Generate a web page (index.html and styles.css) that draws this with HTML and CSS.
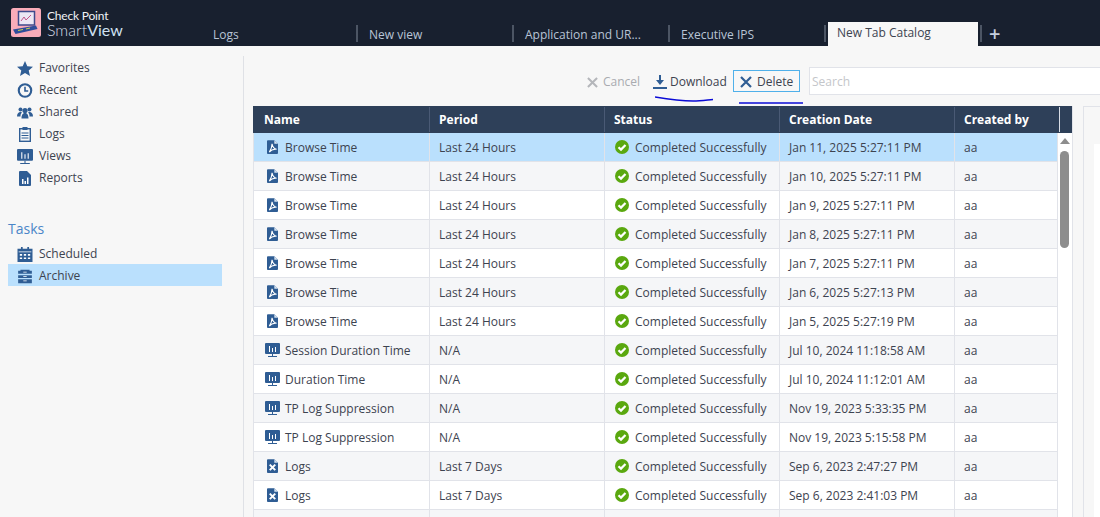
FILE: index.html
```html
<!DOCTYPE html>
<html lang="en">
<head>
<meta charset="utf-8">
<title>SmartView</title>
<link rel="stylesheet" href="styles.css">
</head>
<body>
<svg class="defs" width="0" height="0" aria-hidden="true">
  <symbol id="i-pdf" viewBox="0 0 12 15"><path fill="#2f5d94" d="M1 0h7l4 4v10a1 1 0 0 1-1 1H1a1 1 0 0 1-1-1V1a1 1 0 0 1 1-1z"/><path fill="#d5e2f0" d="M8 0l4 4H8z"/><path fill="none" stroke="#fff" stroke-width="1.200" d="M5.500 4c.6 3 2 5.500 5 6-3-.4-6 .5-8 3 1.500-2 3-5 3-9z"/></symbol>
  <symbol id="i-xls" viewBox="0 0 12 15"><path fill="#2f5d94" d="M1 0h7l4 4v10a1 1 0 0 1-1 1H1a1 1 0 0 1-1-1V1a1 1 0 0 1 1-1z"/><path fill="#d5e2f0" d="M8 0l4 4H8z"/><path stroke="#fff" stroke-width="2.200" d="M3 6l6 6M9 6l-6 6"/></symbol>
  <symbol id="i-view" viewBox="0 0 15 14"><path fill="#2f5d94" d="M1 0h13a1 1 0 0 1 1 1v9a1 1 0 0 1-1 1H1a1 1 0 0 1-1-1V1a1 1 0 0 1 1-1z"/><path fill="#fff" d="M4 3h1v6H4zM7 5h1v4H7zM10 4h1v5h-1z"/><path fill="#2f5d94" d="M7 11h1v2H7zM3 13h9v1H3z"/></symbol>
  <symbol id="i-report" viewBox="0 0 12 15"><path fill="#2f5d94" d="M1 0h7l4 4v10a1 1 0 0 1-1 1H1a1 1 0 0 1-1-1V1a1 1 0 0 1 1-1z"/><path fill="#fff" d="M3 8h1.500v5H3zM5.500 10H7v3H5.500zM8 6.500h1.500V13H8z"/></symbol>
  <symbol id="i-ok" viewBox="0 0 14 14"><circle cx="7" cy="7" r="7" fill="#5aa80f"/><path fill="none" stroke="#fff" stroke-width="2.200" d="M3.500 7.200l2.500 2.400 4.500-4.600"/></symbol>
  <symbol id="i-x" viewBox="0 0 12 12"><path fill="none" stroke="currentColor" stroke-width="2.200" d="M1 1l10 10M11 1L1 11"/></symbol>
</svg>

<header class="topbar">
  <div class="brand">
    <svg class="logo" viewBox="0 0 30 29" width="30" height="29">
      <rect width="30" height="29" rx="2.500" fill="#f9acba"/>
      <rect x="7.500" y="3.500" width="16" height="13.500" fill="#ece7f4" stroke="#3f4a8c" stroke-width="1.500"/>
      <path d="M10 13l3-4 2 3 5-5" fill="none" stroke="#c2558a" stroke-width="1"/>
      <path d="M2 21.500l23-4 1.500 3.500-22 5z" fill="#2f4d9a"/>
      <path d="M7 22.500l5-1M15 21l4-1" stroke="#c9d34c" stroke-width="1"/>
    </svg>
    <div class="brand-text">
      <span class="brand-top">Check Point</span>
      <span class="brand-name">Smart<b>View</b></span>
    </div>
  </div>
  <nav class="tabs">
    <span class="tab">Logs</span>
    <span class="tab tab-sep">New view</span>
    <span class="tab tab-sep">Application and UR...</span>
    <span class="tab tab-sep">Executive IPS</span>
    <span class="tab-active">New Tab Catalog</span>
    <span class="tab-plus">+</span>
  </nav>
</header>

<div class="page">
  <aside class="side">
    <ul class="nav">
      <li class="nav-item"><svg class="nav-ico" viewBox="0 0 16 15"><path fill="#2f5d94" d="M8 0l2.300 5.200 5.700.5-4.300 3.700 1.300 5.600L8 12l-5 3 1.300-5.600L0 5.700l5.700-.5z"/></svg>Favorites</li>
      <li class="nav-item"><svg class="nav-ico" viewBox="0 0 14 14"><circle cx="7" cy="7" r="5.800" fill="none" stroke="#2f5d94" stroke-width="2"/><path fill="none" stroke="#2f5d94" stroke-width="1.500" d="M7 3.500V7.500H10"/></svg>Recent</li>
      <li class="nav-item"><svg class="nav-ico" viewBox="0 0 16 12"><g fill="#2f5d94"><circle cx="3.500" cy="3" r="2"/><circle cx="12.500" cy="3" r="2"/><circle cx="8" cy="4" r="2.600"/><path d="M0 10c0-3 1.500-4.500 3.500-4.500 1 0 1.500.3 1.500.3C4 7 3.500 8 3.500 10zM16 10c0-3-1.500-4.500-3.500-4.500-1 0-1.500.3-1.500.3C12 7 12.500 8 12.500 10zM4.500 12c0-4 1.500-5.500 3.500-5.500s3.500 1.500 3.500 5.500z"/></g></svg>Shared</li>
      <li class="nav-item"><svg class="nav-ico" viewBox="0 0 12 15"><rect x=".7" y="1.700" width="10.600" height="12.600" fill="none" stroke="#2f5d94" stroke-width="1.400"/><rect x="3.500" y="0" width="5" height="3" fill="#2f5d94"/><path stroke="#2f5d94" d="M2.500 6h7M2.500 8.500h7M2.500 11h7"/></svg>Logs</li>
      <li class="nav-item"><svg class="nav-ico"><use href="#i-view"/></svg>Views</li>
      <li class="nav-item"><svg class="nav-ico"><use href="#i-report"/></svg>Reports</li>
    </ul>
    <h2 class="side-title">Tasks</h2>
    <ul class="nav nav-tasks">
      <li class="nav-item"><svg class="nav-ico" viewBox="0 0 13 13"><path fill="#2f5d94" d="M0 1.500h13V13H0z"/><path fill="#2f5d94" d="M3 0h1.500v2H3zM8.500 0H10v2H8.500z"/><path fill="#fff" d="M1 4h11v.6H1zM2 6h2v1.500H2zM5.500 6h2v1.500h-2zM9 6h2v1.500H9zM2 9h2v1.500H2zM5.500 9h2v1.500h-2zM9 9h2v1.500H9z"/></svg>Scheduled</li>
      <li class="nav-item nav-selected"><svg class="nav-ico" viewBox="0 0 14 12"><path fill="#2f5d94" d="M1 1h12v2.500H1zM1 4.800h12v2.500H1zM1 8.500h12V12H1zM3 0h8v1H3z"/><path fill="#fff" d="M5.500 1.800h3v.7h-3zM5.500 5.600h3v.7h-3zM5.500 9.500h3v.7h-3z"/></svg>Archive</li>
    </ul>
  </aside>

  <main class="main">
    <div class="toolbar">
      <span class="tool tool-off"><svg class="tool-x" viewBox="0 0 12 12"><use href="#i-x"/></svg>Cancel</span>
      <span class="tool tool-dl"><svg class="tool-dl-ico" viewBox="0 0 14 14"><path fill="#2f5d94" d="M6 0h2v5h3L7 10 3 5h3zM0 12h14v2H0z"/></svg>Download</span>
      <span class="tool tool-focus"><svg class="tool-x tool-x-on" viewBox="0 0 12 12"><use href="#i-x"/></svg>Delete</span>
      <div class="search">Search</div>
    </div>

    <div class="content">
      <section class="grid">
        <div class="row head">
          <div class="cell">Name</div><div class="cell">Period</div><div class="cell">Status</div><div class="cell">Creation Date</div><div class="cell">Created by</div><div class="cell cell-end"></div>
        </div>
        <div class="grid-body">
          <div class="rows">
            <div class="row selected"><div class="cell cell-name"><svg class="f-ico"><use href="#i-pdf"/></svg>Browse Time</div><div class="cell">Last 24 Hours</div><div class="cell cell-status"><svg class="ok"><use href="#i-ok"/></svg>Completed Successfully</div><div class="cell">Jan 11, 2025 5:27:11 PM</div><div class="cell">aa</div></div>
            <div class="row"><div class="cell cell-name"><svg class="f-ico"><use href="#i-pdf"/></svg>Browse Time</div><div class="cell">Last 24 Hours</div><div class="cell cell-status"><svg class="ok"><use href="#i-ok"/></svg>Completed Successfully</div><div class="cell">Jan 10, 2025 5:27:11 PM</div><div class="cell">aa</div></div>
            <div class="row"><div class="cell cell-name"><svg class="f-ico"><use href="#i-pdf"/></svg>Browse Time</div><div class="cell">Last 24 Hours</div><div class="cell cell-status"><svg class="ok"><use href="#i-ok"/></svg>Completed Successfully</div><div class="cell">Jan 9, 2025 5:27:11 PM</div><div class="cell">aa</div></div>
            <div class="row"><div class="cell cell-name"><svg class="f-ico"><use href="#i-pdf"/></svg>Browse Time</div><div class="cell">Last 24 Hours</div><div class="cell cell-status"><svg class="ok"><use href="#i-ok"/></svg>Completed Successfully</div><div class="cell">Jan 8, 2025 5:27:11 PM</div><div class="cell">aa</div></div>
            <div class="row"><div class="cell cell-name"><svg class="f-ico"><use href="#i-pdf"/></svg>Browse Time</div><div class="cell">Last 24 Hours</div><div class="cell cell-status"><svg class="ok"><use href="#i-ok"/></svg>Completed Successfully</div><div class="cell">Jan 7, 2025 5:27:11 PM</div><div class="cell">aa</div></div>
            <div class="row"><div class="cell cell-name"><svg class="f-ico"><use href="#i-pdf"/></svg>Browse Time</div><div class="cell">Last 24 Hours</div><div class="cell cell-status"><svg class="ok"><use href="#i-ok"/></svg>Completed Successfully</div><div class="cell">Jan 6, 2025 5:27:13 PM</div><div class="cell">aa</div></div>
            <div class="row"><div class="cell cell-name"><svg class="f-ico"><use href="#i-pdf"/></svg>Browse Time</div><div class="cell">Last 24 Hours</div><div class="cell cell-status"><svg class="ok"><use href="#i-ok"/></svg>Completed Successfully</div><div class="cell">Jan 5, 2025 5:27:19 PM</div><div class="cell">aa</div></div>
            <div class="row"><div class="cell cell-name"><svg class="f-ico f-wide"><use href="#i-view"/></svg>Session Duration Time</div><div class="cell">N/A</div><div class="cell cell-status"><svg class="ok"><use href="#i-ok"/></svg>Completed Successfully</div><div class="cell">Jul 10, 2024 11:18:58 AM</div><div class="cell">aa</div></div>
            <div class="row"><div class="cell cell-name"><svg class="f-ico f-wide"><use href="#i-view"/></svg>Duration Time</div><div class="cell">N/A</div><div class="cell cell-status"><svg class="ok"><use href="#i-ok"/></svg>Completed Successfully</div><div class="cell">Jul 10, 2024 11:12:01 AM</div><div class="cell">aa</div></div>
            <div class="row"><div class="cell cell-name"><svg class="f-ico f-wide"><use href="#i-view"/></svg>TP Log Suppression</div><div class="cell">N/A</div><div class="cell cell-status"><svg class="ok"><use href="#i-ok"/></svg>Completed Successfully</div><div class="cell">Nov 19, 2023 5:33:35 PM</div><div class="cell">aa</div></div>
            <div class="row"><div class="cell cell-name"><svg class="f-ico f-wide"><use href="#i-view"/></svg>TP Log Suppression</div><div class="cell">N/A</div><div class="cell cell-status"><svg class="ok"><use href="#i-ok"/></svg>Completed Successfully</div><div class="cell">Nov 19, 2023 5:15:58 PM</div><div class="cell">aa</div></div>
            <div class="row"><div class="cell cell-name"><svg class="f-ico"><use href="#i-xls"/></svg>Logs</div><div class="cell">Last 7 Days</div><div class="cell cell-status"><svg class="ok"><use href="#i-ok"/></svg>Completed Successfully</div><div class="cell">Sep 6, 2023 2:47:27 PM</div><div class="cell">aa</div></div>
            <div class="row"><div class="cell cell-name"><svg class="f-ico"><use href="#i-xls"/></svg>Logs</div><div class="cell">Last 7 Days</div><div class="cell cell-status"><svg class="ok"><use href="#i-ok"/></svg>Completed Successfully</div><div class="cell">Sep 6, 2023 2:41:03 PM</div><div class="cell">aa</div></div>
            <div class="row"><div class="cell"></div><div class="cell"></div><div class="cell"></div><div class="cell"></div><div class="cell"></div></div>
          </div>
          <div class="scrollbar"><span class="scroll-up"></span><span class="scroll-thumb"></span></div>
        </div>
      </section>
      <section class="panel"><div class="panel-inner"></div></section>
    </div>
  </main>
</div>

<svg class="ink ink-dl" viewBox="0 0 60 6" width="60" height="6"><path d="M0 1C12 3 24 5 38 5c8 0 14-1 20-1.500" fill="none" stroke="#0b0bd6" stroke-width="1.500"/></svg>
<svg class="ink ink-del" viewBox="0 0 64 2" width="64" height="2"><path d="M0 1h64" stroke="#0b0bd6" stroke-width="1.500"/></svg>
</body>
</html>
```

FILE: styles.css
```css
* { box-sizing: border-box; }
html, body { margin: 0; height: 517px; overflow: hidden; }
body { font: 12px/16px "Open Sans", sans-serif; color: #3d4350; background: #f7f7f7; position: relative; }
.defs { position: absolute; }
ul { list-style: none; margin: 0; padding: 0; }

.topbar { height: 46px; background: #18202f; display: flex; position: relative; }
.brand { width: 200px; padding: 8px 0 0 11px; display: flex; gap: 6px; flex: none; }
.logo { display: block; flex: none; }
.brand-text { display: flex; flex-direction: column; color: #fff; font-family: Lato, sans-serif; }
.brand-top { font-size: 12px; line-height: 13px; margin-top: 1px; white-space: nowrap; letter-spacing: -.2px; color: #f0f2f5; }
.brand-name { font-size: 16px; line-height: 15px; color: #d6dde8; font-weight: 300; white-space: nowrap; }
.brand-name b { font-weight: 400; color: #cfe0f2; }

.tabs { display: flex; align-items: flex-end; flex: 1; }
.tab { width: 156px; height: 20px; padding-left: 13px; color: #b9c4d6; white-space: nowrap; flex: none; line-height: 18px; }
.tab-sep { border-left: 2px solid #4c5564; padding-left: 11px; height: 17px; margin-bottom: 4px; line-height: 20px; }
.tab-active { width: 150px; height: 24px; margin-left: 4px; background: #f7f7f7; color: #3d4350; padding: 3px 0 0 9px; flex: none; position: relative; }
.tab-active::before { content: ""; position: absolute; left: -4px; top: 3px; height: 17px; width: 2px; background: #4c5564; }
.tab-active::after { content: ""; position: absolute; right: -4px; top: 3px; height: 17px; width: 2px; background: #4c5564; }
.tab-plus { margin-left: 11px; color: #c4cedd; font-size: 20px; font-weight: 600; line-height: 24px; height: 24px; }

.page { display: flex; height: 471px; }
.side { width: 244px; flex: none; padding: 11px 0 0 8px; position: relative; }
.side::after { content: ""; position: absolute; right: 0; top: 10px; bottom: 0; width: 1px; background: #dfe1e6; }
.nav-item { height: 22px; width: 214px; display: flex; align-items: center; padding-left: 9px; gap: 6px; line-height: 22px; }
.nav-tasks .nav-item { padding-top: 2px; }
.nav-selected { background: #bae0fd; }
.nav-ico { width: 16px; height: 15px; flex: none; }
.side-title { margin: 30px 0 3px; font-size: 14px; line-height: 20px; font-weight: 400; color: #4a86c8; }

.main { flex: 1; min-width: 0; display: flex; flex-direction: column; overflow: hidden; }
.toolbar { height: 60px; padding: 21px 0 0 343px; display: flex; align-items: flex-start; flex: none; }
.tool { display: flex; align-items: center; height: 28px; white-space: nowrap; padding-top: 2px; flex: none; }
.tool-off { color: #a9abb0; width: 66px; }
.tool-x { width: 11px; height: 11px; margin-right: 5px; color: #b4b6ba; flex: none; }
.tool-dl { width: 80px; }
.tool-dl-ico { width: 14px; height: 14px; margin-right: 3px; flex: none; }
.tool-focus { width: 67px; height: 22px; margin-top: 3px; border: 1px solid #4fb0ea; padding: 1px 0 0 6px; }
.tool-x-on { width: 12px; height: 12px; color: #2f5d94; margin-right: 5px; }
.search { width: 300px; height: 28px; margin-left: 9px; flex: none; background: #fff; border: 1px solid #e1e3e9; color: #c4c6ca; padding-left: 2px; line-height: 28px; }

.content { display: flex; gap: 10px; padding-left: 9px; flex: 1; min-height: 0; }
.grid { width: 820px; flex: none; border-right: 1px solid #e1e3e9; background: #fff; }
.row { display: grid; grid-template-columns: 177px 175px 175px 175px 103px; height: 29px; border-bottom: 1px solid #e1e3e9; background: #fff; }
.rows .row:nth-child(even) { background: #f5f6f8; }
.rows .row.selected { background: #bae0fd; }
.cell { padding: 2px 0 0 9px; border-right: 1px solid #e1e3e9; line-height: 26px; white-space: nowrap; display: flex; align-items: center; }
.row .cell:first-child { border-left: 1px solid #e1e3e9; }
.head { grid-template-columns: 177px 175px 175px 175px 105px 13px; height: 27px; background: #2e4059; border-bottom: 0; color: #fff; font-weight: 700; }
.head .cell { border-right-color: #4a5a75; padding: 0 0 0 9px; line-height: 26px; margin-top: 1px; height: 25px; }
.head .cell:first-child { border-left: 0; padding-left: 11px; }
.head .cell:nth-child(5) { border-right-color: #d8dde6; }
.head .cell-end { border: 0; padding: 0; }
.grid-body { display: flex; }
.rows { width: 805px; flex: none; }
.cell-name { padding-left: 13px; }
.f-ico { width: 11px; height: 14px; margin: 0 7px 2px 0; flex: none; }
.f-wide { width: 15px; margin: 0 5px 2px -2px; }
.ok { width: 14px; height: 14px; margin: 0 6px 2px 0; flex: none; }
.cell-status { padding-left: 10px; }
.scrollbar { width: 14px; display: flex; flex-direction: column; align-items: center; padding-top: 5px; background: #fff; }
.scroll-up { width: 0; height: 0; border: 5px solid transparent; border-top: 0; border-bottom: 6px solid #8d8d8d; }
.scroll-thumb { width: 9px; height: 97px; margin-top: 7px; background: #8d8d8d; border-radius: 5px; margin-left: -1px; }
.panel { flex: 1; border: 1px solid #e1e3e9; border-right: 0; border-bottom: 0; padding: 37px 0 0 10px; display: flex; }
.panel-inner { flex: 1; background: #fff; }

.ink { position: absolute; display: block; }
.ink-dl { left: 655px; top: 96px; }
.ink-del { left: 739px; top: 102px; }
```
